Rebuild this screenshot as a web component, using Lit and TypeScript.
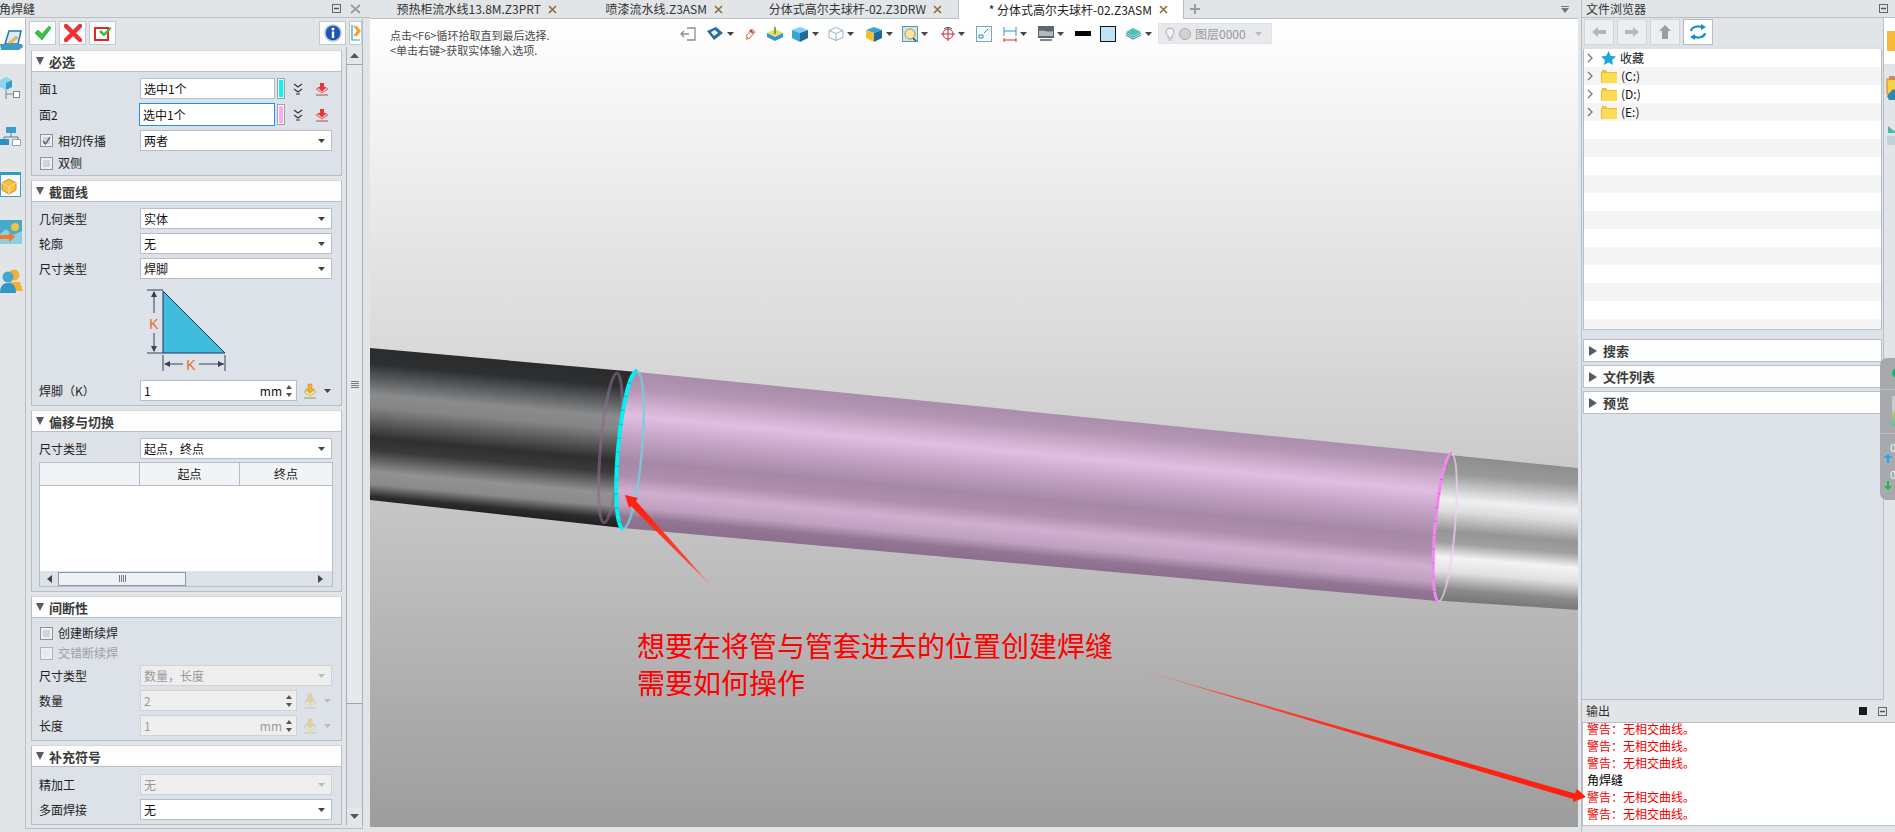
import { LitElement, html, css, nothing } from "lit";
import { customElement } from "lit/decorators.js";

const caret = html`<svg class="caret" width="7" height="4" viewBox="0 0 7 4"><path d="M0 0h7L3.5 4z" /></svg>`;
const caretOff = html`<svg class="caret off" width="7" height="4" viewBox="0 0 7 4"><path d="M0 0h7L3.5 4z" /></svg>`;

const okIcon = html`<svg width="18" height="16" viewBox="0 0 18 16"><path d="M1 8l3-3 4 4 7-8 2 2-9 12z" fill="#3cc43c" stroke="#1c9a2c" stroke-width=".6" /></svg>`;
const cancelIcon = html`<svg width="18" height="18" viewBox="0 0 18 18"><path d="M2 2l14 14M16 2L2 16" stroke="#ee3030" stroke-width="4.5" stroke-linecap="round" /></svg>`;
const previewIcon = html`<svg width="18" height="16" viewBox="0 0 18 16"><rect x="1" y="3" width="13" height="12" fill="#fff" stroke="#e02828" stroke-width="2" /><path d="M5 7l2-2 3 3 6-6 1.5 1.5-7.5 8z" fill="#35bd3c" /></svg>`;
const infoIcon = html`<svg width="18" height="18" viewBox="0 0 18 18"><circle cx="9" cy="9" r="8" fill="#1b55b8" stroke="#b9c2d0" stroke-width="1.5" /><rect x="7.8" y="7.5" width="2.4" height="6.5" fill="#fff" /><circle cx="9" cy="5" r="1.5" fill="#fff" /></svg>`;
const collapseIcon = html`<svg width="10" height="20" viewBox="0 0 10 20"><path d="M1 2v15h8" fill="none" stroke="#2a9fc9" stroke-width="1.2" /><path d="M3 3l4 5-4 5M5 3l4 5-4 5" fill="none" stroke="#f0a030" stroke-width="1.5" /></svg>`;
const chevrons = html`<svg class="tool" width="10" height="12" viewBox="0 0 10 12"><path d="M1 1l4 3 4-3M1 6l4 3 4-3M3 11h4" fill="none" stroke="#333" stroke-width="1.1" /></svg>`;
const pickIcon = html`<svg class="tool pick" width="14" height="14" viewBox="0 0 14 14"><path d="M1 7l6-3 6 3-6 4z" fill="#f4b8b8" stroke="#d85050" stroke-width=".7" /><path d="M5 1h4v4h2.5L7 9.5 2.5 5H5z" fill="#e43838" /><path d="M1 13h12" stroke="#a05050" /></svg>`;
const valueIcon = (off = false) => html`<svg class="tool" width="14" height="16" viewBox="0 0 14 16" style="opacity:${off ? 0.35 : 1}"><path d="M1 9l6-3 6 3-6 4z" fill="#f4eaa0" stroke="#b8a840" stroke-width=".7" /><path d="M5 1h4v5h2.5L7 10.5 2.5 6H5z" fill="#f0b030" stroke="#c08820" stroke-width=".5" /><path d="M1 15h12" stroke="#90a040" /></svg>`;

const railIcons = [
  html`<svg width="24" height="22" viewBox="0 0 24 22"><path d="M9 1h12l-3 13H5z" fill="#d8eef8" stroke="#2478a8" stroke-width="1.5" /><path d="M0 14h22l1 3-4 3H1z" fill="#3f9cc8" /><path d="M8 13l8-7 2 2-8 6z" fill="#f4c040" stroke="#c08820" stroke-width=".5" /></svg>`,
  html`<svg width="22" height="24" viewBox="0 0 22 24"><path d="M0 4l6-3 6 3v7l-6 3-6-3z" fill="#8fd4f0" /><path d="M6 7l6-3v7l-6 3z" fill="#3a9ccc" /><path d="M6 14v9M6 18h7" stroke="#789" fill="none" /><rect x="13.5" y="15.5" width="6" height="6" fill="#fff" stroke="#789" /></svg>`,
  html`<svg width="22" height="19" viewBox="0 0 22 19"><rect x="6" y="0" width="10" height="6" fill="#3a9ccc" /><path d="M11 6v4M4 10h14M4 10v3M18 10v3" stroke="#678" fill="none" /><rect x="0" y="12" width="9" height="6" fill="#2f8fc0" /><rect x="12.5" y="12.5" width="8" height="6" fill="#fff" stroke="#8ab" /></svg>`,
  html`<svg width="21" height="25" viewBox="0 0 21 25"><rect x=".5" y=".5" width="20" height="24" fill="#f4f9fc" stroke="#4aa0b8" /><rect x="0" y="0" width="21" height="3" fill="#2f9cc0" /><path d="M2 11l7-4 7 4v7l-7 4-7-4z" fill="#f8c040" stroke="#d8882a" /><path d="M2 11l7 4 7-4M9 15v7" stroke="#fbe6a0" fill="none" /></svg>`,
  html`<svg width="22" height="24" viewBox="0 0 22 24"><rect x="0" y="0" width="22" height="24" fill="#48a8c8" /><circle cx="15" cy="7" r="4" fill="#f8c040" /><path d="M0 14l6-5 7 6 9-4v13H0z" fill="#8cd0e0" /><path d="M0 15h9v-3l6 5-6 5v-3H0z" fill="#f07830" /></svg>`,
  html`<svg width="23" height="26" viewBox="0 0 23 26"><circle cx="14" cy="8" r="5.5" fill="#f4b030" /><path d="M9 15h11l3 9H9z" fill="#f4b030" /><circle cx="8" cy="10" r="5.5" fill="#3fa8d0" /><path d="M0 26c0-7 3-10 8-10s8 3 8 10z" fill="#2f98c4" /></svg>`,
];

// width of each slot in the viewport toolbar, then its icon
const tools: Array<[number, unknown]> = [
  [26, html`<svg width="16" height="16" viewBox="0 0 16 16"><path d="M7 2h8v12H7M1 8h8M4 5L1 8l3 3" fill="none" stroke="#8e8e8e" stroke-width="1.3" /></svg>`],
  [39, html`<svg width="18" height="16" viewBox="0 0 18 16"><path d="M1 5l9-4 7 6-9 7z" fill="#2c6ca0" /><path d="M5 6l4-2 3 3-4 3z" fill="#eef6fb" /></svg>${caret}`],
  [21, html`<svg width="12" height="14" viewBox="0 0 12 14"><path d="M1 9l6-7 3 3-6 7z" fill="#f2f2f2" stroke="#c44" stroke-width=".8" /><path d="M1 9l3 3-3 1z" fill="#f0a030" /><path d="M5 3l3 3" stroke="#d33" stroke-width="2" /></svg>`],
  [25, html`<svg width="18" height="16" viewBox="0 0 18 16"><path d="M1 7l8-4 8 4-8 4z" fill="#f4d860" /><path d="M1 7v4l8 4v-4zM17 7v4l-8 4v-4z" fill="#2f98c8" /><path d="M9 1v7" stroke="#3aa040" stroke-width="1.5" /></svg>`],
  [37, html`<svg width="18" height="16" viewBox="0 0 18 16"><path d="M1 4l8-3 8 3-8 3z" fill="#7fd0f0" /><path d="M1 4v8l8 4V7z" fill="#39a4d8" /><path d="M17 4v8l-8 4V7z" fill="#1c6c9c" /></svg>${caret}`],
  [37, html`<svg width="16" height="16" viewBox="0 0 16 16"><path d="M1 4.5l7-3 7 3v7l-7 3-7-3zM1 4.5l7 3 7-3M8 7.5v7" fill="#fff" stroke="#8fb4c8" /></svg>${caret}`],
  [37, html`<svg width="18" height="16" viewBox="0 0 18 16"><path d="M1 4l8-3 8 3-8 3z" fill="#39a4d8" /><path d="M1 4v8l8 4V7z" fill="#f4c030" /><path d="M17 4v8l-8 4V7z" fill="#1c6c9c" /></svg>${caret}`],
  [39, html`<svg width="16" height="16" viewBox="0 0 16 16"><rect x=".5" y=".5" width="15" height="15" fill="#cfe2ec" stroke="#4a9cc0" /><circle cx="8" cy="8" r="5" fill="#f8e4a0" stroke="#b89830" /><path d="M11 12l3 3" stroke="#345" stroke-width="1.5" /></svg>${caret}`],
  [35, html`<svg width="14" height="16" viewBox="0 0 14 16"><circle cx="7" cy="8" r="5" fill="none" stroke="#c8343a" /><path d="M7 1v14M0 8h14" stroke="#d0282c" /><path d="M3 3a6 6 0 0 1 8 0" fill="none" stroke="#446" /></svg>${caret}`],
  [27, html`<svg width="16" height="16" viewBox="0 0 16 16"><rect x=".5" y=".5" width="15" height="15" fill="#f4f8fa" stroke="#78aabc" /><path d="M3 12h4V9H3zM8 7l4-4" stroke="#3a8cc0" fill="none" /></svg>`],
  [35, html`<svg width="14" height="16" viewBox="0 0 14 16"><path d="M1 1v9M13 1v9M1 5h12" stroke="#2f98c8" fill="none" /><path d="M1 14h12M1 12v4M13 12v4" stroke="#d83030" fill="none" /></svg>${caret}`],
  [37, html`<svg width="16" height="16" viewBox="0 0 16 16"><rect x="0" y="0" width="16" height="12" fill="#5a6670" /><path d="M1 5c4-2 9 2 14 0v5H1z" fill="#b0bac4" /><rect x="2" y="13" width="12" height="2" fill="#888" /></svg>${caret}`],
  [25, html`<span class="swatch-bar"></span>`],
  [25, html`<span class="swatch-box"></span>`],
  [33, html`<svg width="17" height="14" viewBox="0 0 17 14"><path d="M1 5l7-4 8 4-8 4z" fill="#50c0b0" /><path d="M1 8l7 4 8-4M1 6l7 4 8-4" fill="none" stroke="#4a9cc0" stroke-width="1.3" /></svg>${caret}`],
];

const folder = html`<svg width="16" height="13" viewBox="0 0 16 13"><path d="M0 2h1V0h4l1 2h10v11H0z" fill="#f8b838" /><rect x="1" y="3" width="15" height="10" fill="#fcdc50" /></svg>`;
const star = html`<svg width="15" height="14" viewBox="0 0 15 14"><path d="M7.5 0l2.2 4.8 5.3.6-3.9 3.5 1 5.1-4.6-2.6L2.900 14l1-5.100L0 5.400l5.300-.6z" fill="#1aa8dc" /></svg>`;
const restore = html`<svg width="9" height="9" viewBox="0 0 9 9"><rect x=".5" y=".5" width="8" height="8" fill="none" stroke="#666" /><path d="M2 4.5h5" stroke="#555" stroke-width="1.5" /></svg>`;
const closeX = html`<svg width="11" height="10" viewBox="0 0 11 10"><path d="M1 1l9 8M10 1L1 9" stroke="#9a9a9a" stroke-width="1.8" /></svg>`;
const tabClose = html`<svg class="tab-x" width="9" height="9" viewBox="0 0 9 9"><path d="M1 1l7 7M8 1L1 8" stroke="#8a6f3c" stroke-width="1.6" /></svg>`;

const navArrow = (d: string, fill: string) => html`<svg width="16" height="14" viewBox="0 0 16 14"><path d="${d}" fill="${fill}" /></svg>`;

@customElement("app-root")
export class AppRoot extends LitElement {
  static styles = css`
    :host {
      display: block;
      position: relative;
      width: 1895px;
      height: 832px;
      overflow: hidden;
      background: #e2e5e8;
      color: #222;
      font: 12px "Noto Sans CJK SC", "Noto Sans", sans-serif;
      line-height: 1;
    }
    .shell {
      display: grid;
      grid-template-columns: 370px 1208px 317px;
      height: 832px;
    }
    .dock-title {
      display: flex;
      align-items: center;
      height: 17px;
      gap: 9px;
      color: #333;
    }
    .dock-title .grow {
      flex: 1;
    }
    .left {
      display: flex;
      flex-direction: column;
    }
    .left .dock-title {
      margin-left: -1px;
      padding-right: 9px;
    }
    .left-main {
      display: flex;
      height: 811px;
      border-top: 1px solid #b8bec6;
    }
    .rail {
      width: 25px;
      flex: none;
      display: flex;
      flex-direction: column;
      align-items: flex-start;
      overflow: hidden;
    }
    .rail-item {
      height: 48px;
      width: 25px;
      display: flex;
      align-items: center;
      justify-content: flex-start;
      flex: none;
      overflow: hidden;
    }
    .rail-item.on {
      background: #fff;
      height: 46px;
    }
    .rail-item svg {
      flex: none;
    }
    .panel {
      width: 338px;
      border-left: 1px solid #b8bec6;
      border-right: 1px solid #b8bec6;
      border-bottom: 1px solid #b8bec6;
      box-sizing: border-box;
      display: flex;
      flex-direction: column;
    }
    .actions {
      display: flex;
      gap: 3px;
      padding: 3px 0 0 3px;
      height: 24px;
      margin-bottom: 5px;
    }
    .act {
      width: 27px;
      height: 24px;
      background: #fcfcfc;
      border: 1px solid #c4c9cf;
      box-sizing: border-box;
      display: flex;
      align-items: center;
      justify-content: center;
    }
    .act.push {
      margin-left: auto;
    }
    .act.slim {
      width: 13px;
    }
    .panel-body {
      display: flex;
      gap: 4px;
      padding-left: 5px;
      height: 775px;
    }
    .form {
      width: 311px;
      flex: none;
      display: flex;
      flex-direction: column;
      gap: 4px;
      overflow: hidden;
    }
    .section {
      border: 1px solid #b8bec6;
      border-top-color: #d4d8dc;
      background: #dde1e8;
      flex: none;
    }
    .section-head {
      height: 21px;
      box-sizing: border-box;
      background: #fdfdfd;
      border-bottom: 1px solid #b8bec6;
      display: flex;
      align-items: center;
      gap: 5px;
      padding-left: 4px;
      font-size: 13px;
      font-weight: 700;
      color: #3c3c3c;
    }
    .tri-d {
      width: 0;
      height: 0;
      border-left: 4.5px solid transparent;
      border-right: 4.5px solid transparent;
      border-top: 8px solid #565a64;
    }
    .tri-r {
      width: 0;
      height: 0;
      border-top: 5px solid transparent;
      border-bottom: 5px solid transparent;
      border-left: 8px solid #565a64;
    }
    .section-body {
      display: flex;
      flex-direction: column;
      gap: 4px;
      padding: 6px 0 4px 7px;
    }
    .section-body.top7 {
      padding-top: 7px;
    }
    .row {
      display: flex;
      align-items: center;
      height: 21px;
    }
    .row.tall {
      height: 23px;
    }
    .row label,
    .row .lead {
      width: 101px;
      flex: none;
    }
    .field {
      height: 21px;
      box-sizing: border-box;
      background: #fff;
      border: 1px solid #b8bec6;
      display: flex;
      align-items: center;
      padding: 0 3px;
      color: #111;
    }
    .field.sel {
      width: 192px;
      justify-content: space-between;
      padding-right: 6px;
    }
    .field.face {
      width: 135px;
    }
    .field.focus {
      height: 23px;
      margin-left: -1px;
      width: 136px;
      border-color: #1e90f0;
    }
    .field.num {
      width: 157px;
      gap: 4px;
      justify-content: space-between;
    }
    .field.off {
      background: #eeeeee;
      border-color: #cfd3d8;
      color: #9a9a9a;
    }
    .caret {
      flex: none;
      fill: #444;
    }
    .off .caret,
    .caret.off {
      fill: #bbb;
    }
    .unit {
      margin-left: auto;
    }
    .spin {
      display: flex;
      flex-direction: column;
      gap: 4px;
      margin-right: 1px;
    }
    .spin i {
      display: block;
      width: 0;
      height: 0;
      border-left: 3px solid transparent;
      border-right: 3px solid transparent;
    }
    .spin i.up {
      border-bottom: 4px solid #555;
    }
    .spin i.dn {
      border-top: 4px solid #555;
    }
    .swatch {
      width: 8px;
      height: 21px;
      box-sizing: border-box;
      margin-left: 2px;
      border: 1px solid #9aa2ac;
      outline: 1px solid #fff;
      outline-offset: -2px;
      flex: none;
    }
    .tool {
      flex: none;
      margin-left: 8px;
    }
    .tool.pick {
      margin-left: 12px;
    }
    .after {
      display: flex;
      align-items: center;
      gap: 7px;
      margin-left: 6px;
    }
    .after .tool {
      margin-left: 0;
    }
    .check {
      display: flex;
      align-items: center;
      gap: 5px;
      height: 16px;
      margin-left: 1px;
    }
    .check.off {
      color: #a0a0a0;
    }
    .box {
      width: 13px;
      height: 13px;
      box-sizing: border-box;
      border: 1px solid #8e949c;
      background: #cfd3da;
      box-shadow: inset 0 0 0 2px #eceef1;
      display: flex;
      align-items: center;
      justify-content: center;
      flex: none;
    }
    .check.off .box {
      border-color: #b0b4ba;
      background: #e6e8ec;
    }
    .diagram {
      height: 93px;
      padding-left: 100px;
    }
    .grid-tbl {
      width: 294px;
      height: 125px;
      margin-top: -1px;
      box-sizing: border-box;
      border: 1px solid #b8bec6;
      background: #fff;
      display: flex;
      flex-direction: column;
    }
    .grid-head {
      display: grid;
      grid-template-columns: 100px 100px 1fr;
      height: 23px;
      box-sizing: border-box;
      background: #f1f3f6;
      border-bottom: 1px solid #b8bec6;
    }
    .grid-head span {
      display: flex;
      align-items: center;
      justify-content: center;
      border-right: 1px solid #b8bec6;
    }
    .grid-head span:last-child {
      border-right: 0;
    }
    .grid-rows {
      flex: 1;
    }
    .hscroll {
      height: 15px;
      background: #dde1e8;
      display: flex;
      align-items: center;
      padding: 0 9px 0 7px;
      gap: 6px;
    }
    .hscroll .l {
      border-top: 4px solid transparent;
      border-bottom: 4px solid transparent;
      border-right: 5px solid #444;
    }
    .hscroll .r {
      border-top: 4px solid transparent;
      border-bottom: 4px solid transparent;
      border-left: 5px solid #444;
      margin-left: auto;
    }
    .hscroll .thumb {
      width: 128px;
      height: 14px;
      box-sizing: border-box;
      border: 1px solid #8e98a4;
      background: #eff2f5;
      display: flex;
      align-items: center;
      justify-content: center;
    }
    .grip-v {
      width: 7px;
      height: 7px;
      background: repeating-linear-gradient(90deg, #778 0 1px, transparent 1px 2px);
    }
    .vscroll {
      width: 15px;
      flex: none;
      display: flex;
      flex-direction: column;
      border-left: 1px solid #aab0b8;
      border-right: 1px solid #aab0b8;
      background: #dde1e8;
      margin-top: -3px;
    }
    .vs-btn {
      height: 17px;
      background: #e4e7ea;
      display: flex;
      align-items: center;
      justify-content: center;
      flex: none;
    }
    .vs-thumb {
      height: 640px;
      box-sizing: border-box;
      border-top: 1px solid #9aa2ac;
      border-bottom: 1px solid #9aa2ac;
      background: #e6e9ec;
      display: flex;
      align-items: center;
      justify-content: center;
      flex: none;
    }
    .grip-h {
      display: block;
      width: 8px;
      height: 7px;
      background: repeating-linear-gradient(180deg, #778 0 1px, transparent 1px 2px);
    }
    .vs-track {
      flex: 1;
    }
    .center {
      display: flex;
      flex-direction: column;
    }
    .tabs {
      display: flex;
      align-items: stretch;
      height: 19px;
      box-sizing: border-box;
      border-bottom: 1px solid #b8bec6;
      color: #333;
    }
    .tab {
      display: flex;
      align-items: center;
      flex: none;
      box-sizing: border-box;
      justify-content: flex-end;
      gap: 7px;
      padding-right: 7px;
    }
    .tab.on {
      background: #fff;
      height: 19px;
      padding-right: 15px;
      border-left: 1px solid #b8bec6;
      border-right: 1px solid #b8bec6;
      color: #222;
    }
    .tab.prev {
      padding-right: 16px;
    }
    .plus {
      margin-left: 5px;
      display: flex;
      align-items: center;
    }
    .tabs-menu {
      margin-left: auto;
      margin-right: 9px;
      display: flex;
      flex-direction: column;
      align-items: center;
      justify-content: center;
      gap: 1px;
    }
    .tabs-menu b {
      display: block;
      width: 8px;
      height: 1px;
      background: #777;
    }
    .viewport {
      position: relative;
      height: 808px;
      overflow: hidden;
      background: linear-gradient(180deg, #ffffff 0%, #d8d8d8 42%, #bbbbbb 70.7%, #adadad 84.3%, #9d9d9d 100%);
    }
    .scene {
      position: absolute;
      left: 0;
      top: 0;
    }
    .hint {
      position: absolute;
      left: 20px;
      top: 9px;
      font-size: 11px;
      line-height: 15px;
      color: #4a4a4a;
    }
    .toolbar {
      position: absolute;
      left: 310px;
      top: 4px;
      height: 21px;
      display: flex;
      align-items: center;
    }
    .tool-item {
      display: flex;
      align-items: center;
      gap: 3px;
      flex: none;
    }
    .swatch-bar {
      display: block;
      width: 16px;
      height: 5px;
      background: #050505;
    }
    .swatch-box {
      display: block;
      width: 16px;
      height: 16px;
      box-sizing: border-box;
      background: #bde3f5;
      border: 1px solid #1a1010;
    }
    .layer {
      width: 114px;
      height: 21px;
      box-sizing: border-box;
      background: #e8e9ec;
      border: 1px solid #dfe2e6;
      display: flex;
      align-items: center;
      gap: 4px;
      padding: 0 9px 0 6px;
      color: #9a9a9a;
    }
    .layer .dot {
      width: 12px;
      height: 12px;
      border-radius: 50%;
      background: #d0d2d4;
      border: 1px solid #aaa;
      box-sizing: border-box;
      flex: none;
    }
    .layer .caret {
      margin-left: auto;
    }
    .note {
      position: absolute;
      left: 267px;
      top: 608px;
      font-size: 28px;
      line-height: 37px;
      color: #ff0000;
      white-space: nowrap;
    }
    .right {
      display: flex;
      flex-direction: column;
      margin-left: 3px;
      border-left: 1px solid #b8bec6;
    }
    .right .dock-title {
      padding: 0 8px 0 4px;
      width: 314px;
      box-sizing: border-box;
    }
    .right-top {
      display: flex;
      height: 682px;
      border-top: 1px solid #b8bec6;
    }
    .browser {
      width: 302px;
      flex: none;
      box-sizing: border-box;
      background: #dde1e8;
      border-right: 1px solid #b8bec6;
      border-bottom: 1px solid #b8bec6;
      padding: 0 1px;
      display: flex;
      flex-direction: column;
    }
    .nav {
      display: flex;
      gap: 3px;
      height: 26px;
      margin: 0 -1px 4px -1px;
      padding: 1px 0 0 2px;
      background: #e2e5e8;
    }
    .nav-btn {
      width: 30px;
      height: 26px;
      box-sizing: border-box;
      border: 1px solid #d2d5d9;
      background: #eceef0;
      display: flex;
      align-items: center;
      justify-content: center;
    }
    .nav-btn.on {
      background: #fff;
      border-color: #b8bec6;
    }
    .tree {
      height: 281px;
      box-sizing: border-box;
      background: #fff;
      border: 1px solid #b8bec6;
      border-top: 0;
      overflow: hidden;
      margin-bottom: 9px;
      flex: none;
    }
    .tree-row {
      height: 18px;
      display: flex;
      align-items: center;
      gap: 4px;
      padding-left: 3px;
      color: #111;
    }
    .tree-row:nth-child(even) {
      background: #f5f5f5;
    }
    .tree-row .arrow {
      width: 10px;
      flex: none;
    }
    .fold {
      height: 23px;
      box-sizing: border-box;
      border: 1px solid #b8bec6;
      background: #fdfdfd;
      display: flex;
      align-items: center;
      gap: 6px;
      padding-left: 5px;
      margin-bottom: 3px;
      font-size: 13px;
      font-weight: 700;
      color: #3c3c3c;
      flex: none;
    }
    .rail-r {
      flex: 1;
      overflow: hidden;
    }
    .rail-r .rail-item {
      padding-left: 2px;
    }
    .output-title {
      display: flex;
      align-items: center;
      height: 22px;
      padding: 0 8px 0 4px;
      gap: 11px;
      color: #333;
    }
    .output-title .grow {
      flex: 1;
    }
    .stop {
      width: 8px;
      height: 8px;
      background: #1a1a1a;
      display: block;
    }
    .output {
      height: 104px;
      box-sizing: border-box;
      background: #fff;
      border: 1px solid #b8bec6;
      border-right: 0;
      padding-left: 4px;
      overflow: hidden;
    }
    .output div {
      height: 17px;
      line-height: 17px;
      color: #f00000;
      white-space: nowrap;
    }
    .output div.first {
      margin-top: -3px;
    }
    .output div.plain {
      color: #000;
    }
    .gauge {
      position: absolute;
      left: 1880px;
      top: 358px;
      width: 24px;
      height: 142px;
      border-radius: 7px;
      background: #a7a9ac;
      display: flex;
      flex-direction: column;
      align-items: flex-start;
      box-sizing: border-box;
      color: #f2f2f2;
      font-size: 11px;
    }
    .gauge i {
      display: block;
      width: 10px;
      height: 10px;
      border-radius: 50%;
      background: #12b87c;
      margin: 10px 0 0 12px;
    }
    .gauge hr {
      width: 100%;
      height: 1px;
      border: 0;
      margin: 0;
      background: #bcbec1;
    }
    .gauge em {
      display: block;
      width: 10px;
      height: 30px;
      margin: 6px 0 0 12px;
      background: linear-gradient(180deg, #c8cacc 0 50%, #c0c860 55%, #50c8a0 100%);
    }
    .gauge span {
      display: block;
      margin: 7px 0 0 10px;
      line-height: 13px;
    }
    .gauge svg {
      margin-left: 4px;
      flex: none;
    }
    .overlay {
      position: absolute;
      left: 0;
      top: 0;
      pointer-events: none;
    }
  `;

  private select(text: string, off = false) {
    return html`<div class="field sel ${off ? "off" : ""}">${text}${caret}</div>`;
  }

  private numRow(name: string, value: string, unit: string, off = false) {
    return html`<div class="row">
      <label>${name}</label>
      <div class="field num ${off ? "off" : ""}">
        ${value}<span class="unit">${unit}</span>
        <span class="spin"><i class="up"></i><i class="dn"></i></span>
      </div>
      <div class="after">${valueIcon(off)}${off ? caretOff : caret}</div>
    </div>`;
  }

  private selRow(name: string, text: string, off = false) {
    return html`<div class="row"><label>${name}</label>${this.select(text, off)}</div>`;
  }

  private check(text: string, checked = false, off = false) {
    return html`<div class="check ${off ? "off" : ""}">
      <span class="box">${checked
        ? html`<svg width="9" height="9" viewBox="0 0 9 9"><path d="M1 5l2.5 3L8 1" fill="none" stroke="#556" stroke-width="1.3" /></svg>`
        : nothing}</span>${text}
    </div>`;
  }

  private section(title: string, body: unknown, top7 = false) {
    return html`<div class="section">
      <div class="section-head"><span class="tri-d"></span>${title}</div>
      <div class="section-body ${top7 ? "top7" : ""}">${body}</div>
    </div>`;
  }

  private diagram() {
    const ink = "#3b3f5c";
    return html`<div class="diagram">
      <svg width="90" height="90" viewBox="0 0 90 90">
        <path d="M24 8V70H86z" fill="#40bcdc" stroke="#1c3560" stroke-width="1" />
        <path d="M8 7H24M8 70H24M24 72V88M86 72V88" stroke="${ink}" fill="none" />
        <path d="M15 9V30M15 50V68M26 81H44M60 81H85" stroke="${ink}" fill="none" />
        <path d="M15 8l-3 6h6zM15 69l-3-6h6zM25 81l6-3v6zM85 81l-6-3v6z" fill="${ink}" />
        <text x="15" y="46" text-anchor="middle" font-size="14" fill="#ee6a1e" font-family="Liberation Sans">K</text>
        <text x="52" y="87" text-anchor="middle" font-size="14" fill="#ee6a1e" font-family="Liberation Sans">K</text>
      </svg>
    </div>`;
  }

  private leftDock() {
    return html`<div class="left">
      <div class="dock-title"><span>角焊缝</span><span class="grow"></span>${restore}${closeX}</div>
      <div class="left-main">
        <div class="rail">
          ${railIcons.map((icon, i) => html`<div class="rail-item ${i === 0 ? "on" : ""}">${icon}</div>`)}
        </div>
        <div class="panel">
          <div class="actions">
            <div class="act">${okIcon}</div>
            <div class="act">${cancelIcon}</div>
            <div class="act">${previewIcon}</div>
            <div class="act push">${infoIcon}</div>
            <div class="act slim">${collapseIcon}</div>
          </div>
          <div class="panel-body">
            <div class="form">
              ${this.section("必选", html`
                <div class="row">
                  <label>面1</label>
                  <div class="field face">选中1个</div>
                  <span class="swatch" style="background:#00f8f8"></span>
                  ${chevrons}${pickIcon}
                </div>
                <div class="row tall">
                  <label>面2</label>
                  <div class="field focus">选中1个</div>
                  <span class="swatch" style="background:#ffaaf0"></span>
                  ${chevrons}${pickIcon}
                </div>
                <div class="row">
                  <div class="lead">${this.check("相切传播", true)}</div>
                  ${this.select("两者")}
                </div>
                ${this.check("双侧")}
              `)}
              ${this.section("截面线", html`
                ${this.selRow("几何类型", "实体")}
                ${this.selRow("轮廓", "无")}
                ${this.selRow("尺寸类型", "焊脚")}
                ${this.diagram()}
                ${this.numRow("焊脚（K）", "1", "mm")}
              `)}
              ${this.section("偏移与切换", html`
                ${this.selRow("尺寸类型", "起点，终点")}
                <div class="grid-tbl">
                  <div class="grid-head"><span></span><span>起点</span><span>终点</span></div>
                  <div class="grid-rows"></div>
                  <div class="hscroll">
                    <span class="l"></span>
                    <span class="thumb"><span class="grip-v"></span></span>
                    <span class="r"></span>
                  </div>
                </div>
              `)}
              ${this.section("间断性", html`
                ${this.check("创建断续焊")}
                ${this.check("交错断续焊", false, true)}
                ${this.selRow("尺寸类型", "数量，长度", true)}
                ${this.numRow("数量", "2", "", true)}
                ${this.numRow("长度", "1", "mm", true)}
              `, true)}
              ${this.section("补充符号", html`
                ${this.selRow("精加工", "无", true)}
                ${this.selRow("多面焊接", "无")}
              `, true)}
            </div>
            <div class="vscroll">
              <div class="vs-btn"><svg width="9" height="5" viewBox="0 0 9 5"><path d="M0 5h9L4.5 0z" fill="#555" /></svg></div>
              <div class="vs-thumb"><span class="grip-h"></span></div>
              <div class="vs-track"></div>
              <div class="vs-btn"><svg width="9" height="5" viewBox="0 0 9 5"><path d="M0 0h9L4.5 5z" fill="#555" /></svg></div>
            </div>
          </div>
        </div>
      </div>
    </div>`;
  }

  private scene() {
    return html`<svg class="scene" width="1208" height="808" viewBox="370 19 1208 808">
      <defs>
        <linearGradient id="blk" gradientUnits="userSpaceOnUse" x1="500" y1="360" x2="486" y2="513">
          <stop offset="0" stop-color="#2a2b2d" />
          <stop offset=".1" stop-color="#2e2f31" />
          <stop offset=".3" stop-color="#8a8b8c" />
          <stop offset=".38" stop-color="#858585" />
          <stop offset=".58" stop-color="#2f2f30" />
          <stop offset=".66" stop-color="#3a3a3a" />
          <stop offset=".8" stop-color="#929292" />
          <stop offset=".88" stop-color="#8a8a8a" />
          <stop offset=".96" stop-color="#2c2c2c" />
          <stop offset="1" stop-color="#222222" />
        </linearGradient>
        <linearGradient id="pur" gradientUnits="userSpaceOnUse" x1="1000" y1="408" x2="986" y2="558">
          <stop offset="0" stop-color="#aa8cab" />
          <stop offset=".1" stop-color="#b496b4" />
          <stop offset=".28" stop-color="#e2bfe2" />
          <stop offset=".4" stop-color="#c7a6c8" />
          <stop offset=".58" stop-color="#a688a6" />
          <stop offset=".68" stop-color="#ad8fad" />
          <stop offset=".78" stop-color="#cfafcf" />
          <stop offset=".88" stop-color="#c0a0c0" />
          <stop offset=".95" stop-color="#937694" />
          <stop offset="1" stop-color="#8c708d" />
        </linearGradient>
        <linearGradient id="gry" gradientUnits="userSpaceOnUse" x1="1510" y1="461" x2="1498" y2="605">
          <stop offset="0" stop-color="#8c8e8e" />
          <stop offset=".12" stop-color="#999999" />
          <stop offset=".3" stop-color="#eff0f2" />
          <stop offset=".38" stop-color="#dddddd" />
          <stop offset=".52" stop-color="#959595" />
          <stop offset=".6" stop-color="#a0a0a0" />
          <stop offset=".7" stop-color="#f4f4f4" />
          <stop offset=".8" stop-color="#e0e0e0" />
          <stop offset=".92" stop-color="#8a8a8a" />
          <stop offset="1" stop-color="#777777" />
        </linearGradient>
      </defs>
      <path d="M370 348L637 372L623 528L370 500z" fill="url(#blk)" />
      <path d="M1430 453L1578 468V610L1430 600z" fill="url(#gry)" />
      <g transform="translate(610.5 448) rotate(5)">
        <ellipse rx="10" ry="75" fill="none" stroke="#8a6a8a" stroke-opacity=".6" stroke-width="3" />
      </g>
      <path d="M637 372L1452 454A10 74 5 0 0 1438 601L623 528A12 79 5 0 1 637 372z" fill="url(#pur)" />
      <g transform="translate(630 450) rotate(5)" fill="none">
        <path d="M0 -79A12 79 0 0 1 0 79" stroke="#74cfe0" stroke-opacity=".8" stroke-width="2.5" />
        <path d="M0 -79A12 79 0 0 0 0 79" stroke="#00f2f2" stroke-width="4" />
        <path d="M0 -79A12 79 0 0 0 0 79" stroke="#2a8a8a" stroke-opacity=".5" stroke-width="4" stroke-dasharray="1 13" />
      </g>
      <g transform="translate(1445 527.5) rotate(5)" fill="none">
        <path d="M0 -74A10 74 0 0 1 0 74" stroke="#f4ccf4" stroke-opacity=".7" stroke-width="2" />
        <path d="M0 -74A10 74 0 0 0 0 74" stroke="#f486f4" stroke-width="3" />
        <path d="M0 -74A10 74 0 0 0 0 74" stroke="#8a5a8a" stroke-opacity=".4" stroke-width="3" stroke-dasharray="1 13" />
      </g>
    </svg>`;
  }

  private center() {
    const tabs: Array<[string, number, string]> = [
      ["预热柜流水线13.8M.Z3PRT", 194, ""],
      ["喷漆流水线.Z3ASM", 166, ""],
      ["分体式高尔夫球杆-02.Z3DRW", 228, "prev"],
      ["* 分体式高尔夫球杆-02.Z3ASM", 226, "on"],
    ];
    return html`<div class="center">
      <div class="tabs">
        ${tabs.map(
          ([name, width, cls]) => html`<div class="tab ${cls}" style="width:${width}px">${name}${tabClose}</div>`
        )}
        <div class="plus"><svg width="12" height="12" viewBox="0 0 12 12"><path d="M6 1v10M1 6h10" stroke="#9a9ea4" stroke-width="2" /></svg></div>
        <div class="tabs-menu"><b></b><svg width="8" height="5" viewBox="0 0 8 5"><path d="M0 0h8L4 5z" fill="#777" /></svg></div>
      </div>
      <div class="viewport">
        ${this.scene()}
        <div class="hint">点击&lt;F6&gt;循环拾取直到最后选择.<br />&lt;单击右键&gt;获取实体输入选项.</div>
        <div class="toolbar">
          ${tools.map(([width, t]) => html`<div class="tool-item" style="width:${width}px">${t}</div>`)}
          <div class="layer">
            <svg width="10" height="14" viewBox="0 0 10 14"><path d="M5 1a4 4 0 0 1 2 7.5V11H3V8.5A4 4 0 0 1 5 1zM3.5 13h3" fill="#f4f4f4" stroke="#a8a8a8" /></svg>
            <span class="dot"></span>图层0000${caretOff}
          </div>
        </div>
        <div class="note">想要在将管与管套进去的位置创建焊缝<br />需要如何操作</div>
      </div>
    </div>`;
  }

  private rightDock() {
    const rows: Array<[unknown, string]> = [
      [star, "收藏"],
      [folder, "(C:)"],
      [folder, "(D:)"],
      [folder, "(E:)"],
      ...Array.from({ length: 12 }, () => [nothing, ""] as [unknown, string]),
    ];
    const warn = "警告：无相交曲线。";
    return html`<div class="right">
      <div class="dock-title"><span>文件浏览器</span><span class="grow"></span>${restore}</div>
      <div class="right-top">
        <div class="browser">
          <div class="nav">
            <div class="nav-btn">${navArrow("M1 7l6-5v3h8v4H7v3z", "#b4b8bc")}</div>
            <div class="nav-btn">${navArrow("M15 7L9 2v3H1v4h8v3z", "#b4b8bc")}</div>
            <div class="nav-btn">${navArrow("M8 0l6 6h-3v8H5V6H2z", "#9a9ea2")}</div>
            <div class="nav-btn on">
              <svg width="20" height="18" viewBox="0 0 20 18"><path d="M3 8a7 5 0 0 1 12-3" fill="none" stroke="#1a90c0" stroke-width="2.2" /><path d="M13 1l5 3-5 3z" fill="#1a90c0" /><path d="M17 10a7 5 0 0 1-12 3" fill="none" stroke="#1a90c0" stroke-width="2.2" /><path d="M7 17l-5-3 5-3z" fill="#1a90c0" /></svg>
            </div>
          </div>
          <div class="tree">
            ${rows.map(
              ([icon, text]) => html`<div class="tree-row">
                <span class="arrow">${text
                  ? html`<svg width="7" height="10" viewBox="0 0 7 10"><path d="M1 1l4 4-4 4" fill="none" stroke="#777" stroke-width="1.3" /></svg>`
                  : nothing}</span>
                ${icon}${text}
              </div>`
            )}
          </div>
          <div class="fold"><span class="tri-r"></span>搜索</div>
          <div class="fold"><span class="tri-r"></span>文件列表</div>
          <div class="fold"><span class="tri-r"></span>预览</div>
        </div>
        <div class="rail-r">
          ${[
            html`<svg width="14" height="22" viewBox="0 0 14 22"><rect x="1" y="1" width="14" height="20" fill="#f8b838" /></svg>`,
            html`<svg width="14" height="24" viewBox="0 0 14 24"><rect x="1" y="3" width="14" height="15" fill="#fcd040" stroke="#c88040" /><rect x="3" y="0" width="7" height="4" fill="#c88a60" /><path d="M1 20l6-7 8 5v6H3z" fill="#2f88b0" /></svg>`,
            html`<svg width="14" height="22" viewBox="0 0 14 22"><path d="M2 1l6 5 6-5v7H2z" fill="#4fb8a8" /><path d="M1 11h13v9H1z" fill="#c4d0d8" /></svg>`,
          ].map((icon, i) => html`<div class="rail-item ${i === 0 ? "on" : ""}">${icon}</div>`)}
        </div>
      </div>
      <div class="output-title">
        <span>输出</span><span class="grow"></span><span class="stop"></span>${restore}
      </div>
      <div class="output">
        <div class="first">${warn}</div>
        <div>${warn}</div>
        <div>${warn}</div>
        <div class="plain">角焊缝</div>
        <div>${warn}</div>
        <div>${warn}</div>
      </div>
    </div>`;
  }

  render() {
    return html`
      <div class="shell">${this.leftDock()}${this.center()}${this.rightDock()}</div>
      <div class="gauge">
        <i></i>
        <hr style="margin-top:11px" />
        <em></em>
        <hr style="margin-top:7px" />
        <span>0</span>
        <svg width="8" height="9" viewBox="0 0 8 9"><path d="M4 0l4 4H5v5H3V4H0z" fill="#18a8f8" /></svg>
        <span style="margin-top:5px">0</span>
        <svg width="8" height="9" viewBox="0 0 8 9"><path d="M4 9L0 5h3V0h2v5h3z" fill="#10c040" /></svg>
      </div>
      <svg class="overlay" width="1895" height="832" viewBox="0 0 1895 832">
        <defs>
          <linearGradient id="a1" gradientUnits="userSpaceOnUse" x1="715" y1="590" x2="640" y2="510">
            <stop offset="0" stop-color="#f6a8a0" />
            <stop offset=".35" stop-color="#fa4838" />
            <stop offset="1" stop-color="#ff2010" />
          </linearGradient>
          <linearGradient id="a2" gradientUnits="userSpaceOnUse" x1="1123" y1="665" x2="1400" y2="745">
            <stop offset="0" stop-color="#c8a8a4" />
            <stop offset=".4" stop-color="#f84838" />
            <stop offset="1" stop-color="#ff2010" />
          </linearGradient>
        </defs>
        <path d="M625 495L638 498L636 501L715 590L631 506L629 508z" fill="url(#a1)" />
        <path d="M1586 797L1577 789L1575 793.5L1123 665L1573 799L1573 802z" fill="url(#a2)" />
      </svg>
    `;
  }
}
